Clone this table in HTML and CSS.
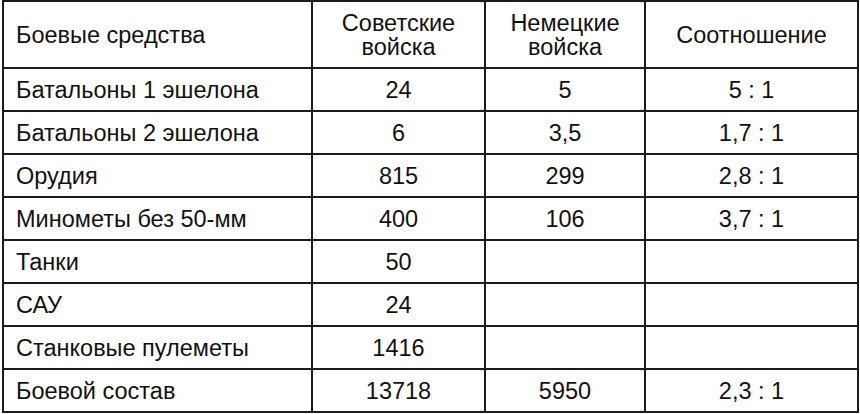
FILE: index.html
```html
<!DOCTYPE html>
<html lang="ru">
<head>
<meta charset="utf-8">
<link rel="stylesheet" href="styles.css">
</head>
<body>
<table class="forces">
  <colgroup>
    <col class="c1"><col class="c2"><col class="c3"><col class="c4">
  </colgroup>
  <thead>
    <tr class="head">
      <th class="name">Боевые средства</th>
      <th>Советские<br>войска</th>
      <th>Немецкие<br>войска</th>
      <th>Соотношение</th>
    </tr>
  </thead>
  <tbody>
    <tr><td class="name">Батальоны 1 эшелона</td><td>24</td><td>5</td><td>5 : 1</td></tr>
    <tr><td class="name">Батальоны 2 эшелона</td><td>6</td><td>3,5</td><td>1,7 : 1</td></tr>
    <tr><td class="name">Орудия</td><td>815</td><td>299</td><td>2,8 : 1</td></tr>
    <tr><td class="name">Минометы без 50-мм</td><td>400</td><td>106</td><td>3,7 : 1</td></tr>
    <tr><td class="name">Танки</td><td>50</td><td></td><td></td></tr>
    <tr><td class="name">САУ</td><td>24</td><td></td><td></td></tr>
    <tr><td class="name">Станковые пулеметы</td><td>1416</td><td></td><td></td></tr>
    <tr><td class="name">Боевой состав</td><td>13718</td><td>5950</td><td>2,3 : 1</td></tr>
  </tbody>
</table>
</body>
</html>
```
FILE: styles.css
```css
html, body {
  margin: 0;
  padding: 0;
  background: #ffffff;
}
body {
  padding-left: 2px;
  font-family: "Liberation Sans", Arial, sans-serif;
  color: #111111;
}
.forces {
  table-layout: fixed;
  width: 857px;
  border-collapse: separate;
  border-spacing: 0;
  border-top: 2px solid #1c1c1c;
  border-left: 2px solid #1c1c1c;
  box-sizing: border-box;
}
.c1 { width: 309px; }
.c2 { width: 173px; }
.c3 { width: 160px; }
.c4 { width: 213px; }
.forces th,
.forces td {
  border-right: 2px solid #1c1c1c;
  border-bottom: 2px solid #1c1c1c;
  padding: 0;
  text-align: center;
  font-weight: normal;
  font-size: 23.5px;
  line-height: 24px;
  height: 41px;
  box-sizing: border-box;
  vertical-align: middle;
}
.forces tbody td { height: 43px; }
.forces .head th { height: 67px; line-height: 24px; }
.forces .name {
  text-align: left;
  padding-left: 12px;
}
```
